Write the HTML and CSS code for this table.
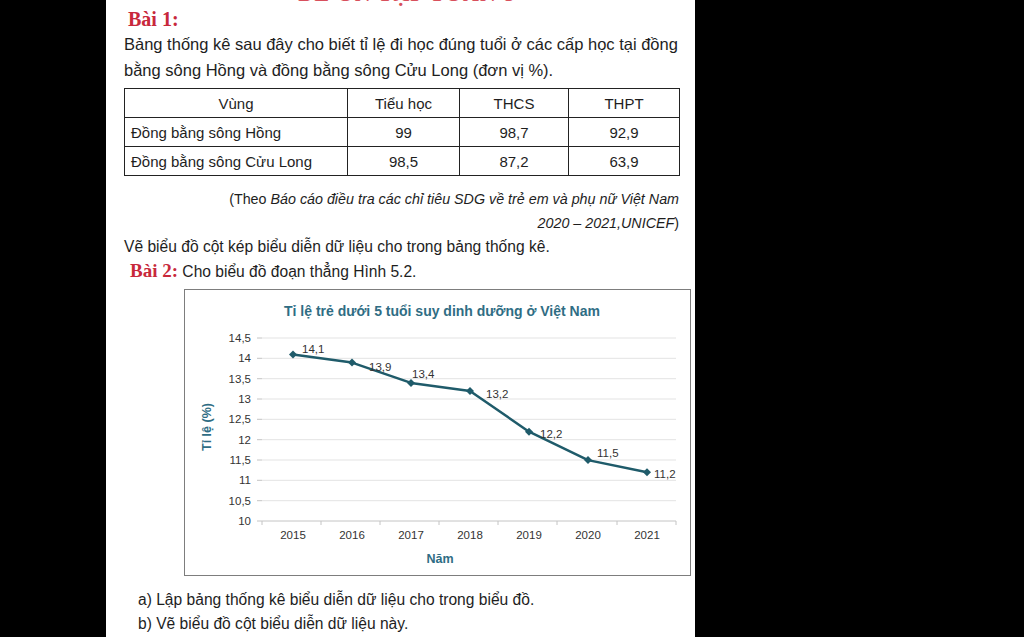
FILE: index.html
```html
<!DOCTYPE html>
<html lang="vi">
<head>
<meta charset="utf-8">
<title>Bài tập thống kê</title>
<link rel="stylesheet" href="styles.css">
</head>
<body>
<div class="page">
  <div class="top-title"><span>ĐỀ ÔN TẬP TOÁN 8</span></div>
  <div class="heading">Bài 1:</div>
  <p class="para">Bảng thống kê sau đây cho biết tỉ lệ đi học đúng tuổi ở các cấp học tại đồng bằng sông Hồng và đồng bằng sông Cửu Long (đơn vị %).</p>
  <table class="data">
    <colgroup>
      <col class="c1"><col class="c2"><col class="c3"><col class="c4">
    </colgroup>
    <thead>
      <tr><th>Vùng</th><th>Tiểu học</th><th>THCS</th><th>THPT</th></tr>
    </thead>
    <tbody>
      <tr><td class="name">Đồng bằng sông Hồng</td><td>99</td><td>98,7</td><td>92,9</td></tr>
      <tr><td class="name">Đồng bằng sông Cửu Long</td><td>98,5</td><td>87,2</td><td>63,9</td></tr>
    </tbody>
  </table>
  <div class="cite">
    <div>(Theo <i>Báo cáo điều tra các chỉ tiêu SDG về trẻ em và phụ nữ Việt Nam</i></div>
    <div><i>2020 – 2021,UNICEF</i>)</div>
  </div>
  <p class="line">Vẽ biểu đồ cột kép biểu diễn dữ liệu cho trong bảng thống kê.</p>
  <p class="line task2"><span class="heading-inline">Bài 2:</span> Cho biểu đồ đoạn thẳng Hình 5.2.</p>
  <div class="chart">
    <svg class="chart-svg" viewBox="185 290 505 285" width="505" height="285" xmlns="http://www.w3.org/2000/svg">
      <text class="ctitle" x="442" y="316" text-anchor="middle">Tỉ lệ trẻ dưới 5 tuổi suy dinh dưỡng ở Việt Nam</text>
      <g class="grid">
        <line x1="262" y1="338" x2="676" y2="338"/>
        <line x1="262" y1="358.3" x2="676" y2="358.3"/>
        <line x1="262" y1="378.7" x2="676" y2="378.7"/>
        <line x1="262" y1="399" x2="676" y2="399"/>
        <line x1="262" y1="419.3" x2="676" y2="419.3"/>
        <line x1="262" y1="439.7" x2="676" y2="439.7"/>
        <line x1="262" y1="460" x2="676" y2="460"/>
        <line x1="262" y1="480.3" x2="676" y2="480.3"/>
        <line x1="262" y1="500.7" x2="676" y2="500.7"/>
      </g>
      <g class="ticks">
        <line x1="257" y1="338" x2="262" y2="338"/>
        <line x1="257" y1="358.3" x2="262" y2="358.3"/>
        <line x1="257" y1="378.7" x2="262" y2="378.7"/>
        <line x1="257" y1="399" x2="262" y2="399"/>
        <line x1="257" y1="419.3" x2="262" y2="419.3"/>
        <line x1="257" y1="439.7" x2="262" y2="439.7"/>
        <line x1="257" y1="460" x2="262" y2="460"/>
        <line x1="257" y1="480.3" x2="262" y2="480.3"/>
        <line x1="257" y1="500.7" x2="262" y2="500.7"/>
        <line x1="257" y1="521" x2="676" y2="521"/>
        <line x1="262" y1="521" x2="262" y2="525"/>
        <line x1="321" y1="521" x2="321" y2="525"/>
        <line x1="380" y1="521" x2="380" y2="525"/>
        <line x1="439" y1="521" x2="439" y2="525"/>
        <line x1="498" y1="521" x2="498" y2="525"/>
        <line x1="557" y1="521" x2="557" y2="525"/>
        <line x1="617" y1="521" x2="617" y2="525"/>
        <line x1="676" y1="521" x2="676" y2="525"/>
      </g>
      <g class="ylab" text-anchor="end">
        <text x="251" y="342">14,5</text>
        <text x="251" y="362.3">14</text>
        <text x="251" y="382.7">13,5</text>
        <text x="251" y="403">13</text>
        <text x="251" y="423.3">12,5</text>
        <text x="251" y="443.7">12</text>
        <text x="251" y="464">11,5</text>
        <text x="251" y="484.3">11</text>
        <text x="251" y="504.7">10,5</text>
        <text x="251" y="525">10</text>
      </g>
      <g class="xlab" text-anchor="middle">
        <text x="293" y="539">2015</text>
        <text x="352" y="539">2016</text>
        <text x="411" y="539">2017</text>
        <text x="470" y="539">2018</text>
        <text x="529" y="539">2019</text>
        <text x="588" y="539">2020</text>
        <text x="647" y="539">2021</text>
      </g>
      <text class="axis-title" x="440" y="563" text-anchor="middle">Năm</text>
      <text class="axis-title" x="211" y="427" text-anchor="middle" transform="rotate(-90 211 427)">Tỉ lệ (%)</text>
      <polyline class="series" points="293,354.5 352,362.6 411,382.9 470,391 529,431.7 588,460.1 647,472.3"/>
      <g class="markers">
        <path d="M293 350.5 L297 354.5 L293 358.5 L289 354.5 Z"/>
        <path d="M352 358.6 L356 362.6 L352 366.6 L348 362.6 Z"/>
        <path d="M411 378.9 L415 382.9 L411 386.9 L407 382.9 Z"/>
        <path d="M470 387 L474 391 L470 395 L466 391 Z"/>
        <path d="M529 427.7 L533 431.7 L529 435.7 L525 431.7 Z"/>
        <path d="M588 456.1 L592 460.1 L588 464.1 L584 460.1 Z"/>
        <path d="M647 468.3 L651 472.3 L647 476.3 L643 472.3 Z"/>
      </g>
      <g class="dlab">
        <text x="302" y="353">14,1</text>
        <text x="369" y="371">13,9</text>
        <text x="412" y="378">13,4</text>
        <text x="486" y="398">13,2</text>
        <text x="540" y="438">12,2</text>
        <text x="597" y="457">11,5</text>
        <text x="654" y="478">11,2</text>
      </g>
    </svg>
  </div>
  <div class="tasks">
    <p class="line">a) Lập bảng thống kê biểu diễn dữ liệu cho trong biểu đồ.</p>
    <p class="line">b) Vẽ biểu đồ cột biểu diễn dữ liệu này.</p>
  </div>
</div>
</body>
</html>
```

FILE: styles.css
```css
html, body {
  margin: 0;
  padding: 0;
  background: #000;
}

body {
  width: 1024px;
  height: 637px;
  overflow: hidden;
  font-family: "Liberation Sans", Arial, sans-serif;
  color: #1e1e1e;
}

.page {
  width: 589px;
  height: 637px;
  margin-left: 106px;
  background: #fff;
  box-sizing: border-box;
  padding: 0 16px 0 18px;
  overflow: hidden;
}

.top-title {
  height: 8px;
  overflow: hidden;
  display: flex;
  align-items: flex-end;
  justify-content: center;
  padding-left: 10px;
}

.top-title span {
  font-family: "Liberation Serif", "Times New Roman", serif;
  font-weight: bold;
  font-size: 22px;
  line-height: 20px;
  margin-bottom: 4px;
  color: #d8505c;
  letter-spacing: 1px;
  white-space: nowrap;
}

.heading {
  font-family: "Liberation Serif", "Times New Roman", serif;
  font-weight: bold;
  font-size: 20px;
  line-height: 23px;
  height: 23px;
  color: #c8283b;
  padding-left: 4px;
}

.heading-inline {
  font-family: "Liberation Serif", "Times New Roman", serif;
  font-weight: bold;
  font-size: 19px;
  color: #c8283b;
  margin-left: 6px;
}

.para {
  margin: 0;
  font-size: 16.5px;
  line-height: 26px;
}

.data {
  margin-top: 5px;
  border-collapse: collapse;
  width: 555px;
  font-size: 15px;
  table-layout: fixed;
}

.data .c1 { width: 223px; }
.data .c2 { width: 112px; }
.data .c3 { width: 109px; }
.data .c4 { width: 111px; }

.data th,
.data td {
  border: 1.5px solid #222;
  height: 29px;
  padding: 0 6px;
  text-align: center;
  font-weight: normal;
  box-sizing: border-box;
}

.data td.name {
  text-align: left;
}

.cite {
  margin-top: 11px;
  text-align: right;
  font-size: 14.3px;
  line-height: 24px;
}

.line {
  margin: 0;
  font-size: 15.6px;
  line-height: 24px;
}

.task2 {
  line-height: 23px;
}

.chart {
  margin: 6px 0 0 60px;
  width: 507px;
  height: 287px;
  box-sizing: border-box;
  border: 1px solid #7d7d7d;
}

.chart-svg {
  display: block;
  font-family: "Liberation Sans", Arial, sans-serif;
}

.ctitle {
  font-size: 14px;
  font-weight: bold;
  fill: #2f6d84;
}

.grid line {
  stroke: #e3e3e3;
  stroke-width: 1;
}

.ticks line {
  stroke: #c4c4c4;
  stroke-width: 1;
}

.ylab text,
.xlab text,
.dlab text {
  font-size: 11.5px;
  fill: #333;
}

.axis-title {
  font-size: 12.5px;
  font-weight: bold;
  fill: #2f6d84;
}

.series {
  fill: none;
  stroke: #1f5b6a;
  stroke-width: 2.5;
  stroke-linejoin: round;
}

.markers path {
  fill: #1f5b6a;
}

.tasks {
  margin-top: 12px;
  padding-left: 14px;
}
```
